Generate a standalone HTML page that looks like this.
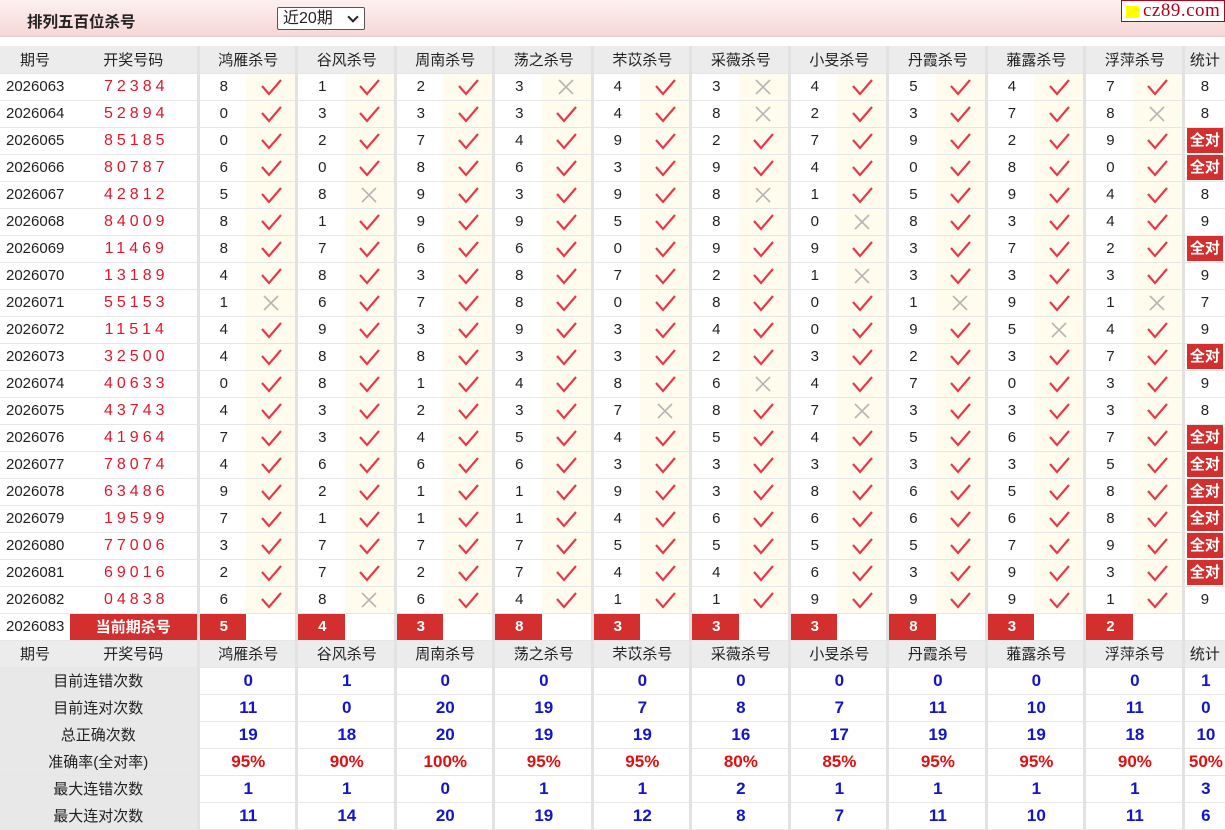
<!DOCTYPE html>
<html><head><meta charset="utf-8">
<style>
*{margin:0;padding:0;box-sizing:border-box}
body{width:1225px;height:830px;background:#fff;font-family:"Liberation Sans","Noto Sans CJK SC",sans-serif;font-size:15px;color:#222;overflow:hidden;position:relative}
.top{position:absolute;left:0;top:0;width:1225px;height:37px;background:linear-gradient(#fdf0f0,#f7d7d7);border-bottom:1px solid #e8c8c8}
.title{position:absolute;left:27px;top:10px;font-size:15.5px;font-weight:bold;color:#222}
.sel{position:absolute;left:277px;top:7px;width:88px;height:23px;border:1px solid #555;background:#fff;font-size:16px;padding-left:5px;line-height:21px;border-radius:2px}
.sel b{position:absolute;right:7px;top:5px;width:8px;height:8px;border-right:2px solid #222;border-bottom:2px solid #222;transform:rotate(45deg)}
.logo{position:absolute;left:1121px;top:0;width:104px;height:22px;border:1px solid #b00020;background:#fff;font-family:"Liberation Serif",serif;font-size:19px;color:#b00020;line-height:20px;padding-left:21px;letter-spacing:0.5px}
.logo i{position:absolute;left:4px;top:5px;width:13px;height:12px;background:#ff0}
table{position:absolute;left:0;top:46px;width:1225px;border-collapse:collapse;table-layout:fixed}
td{height:27px;border-bottom:1px solid #e6e6e6;text-align:center;white-space:nowrap;overflow:hidden;padding:0}
tr.h td{background:#ececec;color:#222}
td.q{text-align:left;padding-left:6px}
td.k{color:#e0162b;letter-spacing:4px;font-size:16px;padding-left:6px}
td.n{border-left:3px solid #e2e2e2;padding-left:2px}
td.c{background:#fffcee}
td.s{border-left:3px solid #e2e2e2}
td.r{background:#d32f2f;color:#fff;font-weight:bold}
td.a{padding:0 2px}
td.a span{display:block;background:#d32f2f;color:#fff;font-weight:bold;height:25px;line-height:25px}
tr.h td.c{background:#ececec}
tr.cur td.c{background:#fff}
td.L{background:#e8e8e8}
td.v{font-weight:bold;color:#1414c8;font-size:17px;border-left:3px solid #e2e2e2;padding-left:2px}
td.p{color:#e01010}
svg{display:block;margin:auto}
</style></head><body>
<svg width="0" height="0" style="position:absolute"><defs>
<symbol id="ok" viewBox="0 0 22 18"><path d="M2 8 L9 16 L21 2" fill="none" stroke="#e8374a" stroke-width="2.2"/></symbol>
<symbol id="no" viewBox="0 0 18 18"><path d="M2 2 L16 16 M16 2 L2 16" fill="none" stroke="#b5b5b5" stroke-width="1.6"/></symbol>
</defs></svg>
<div class="top"><div class="title">排列五百位杀号</div><div class="sel">近20期<b></b></div><div class="logo"><i></i>cz89.com</div></div>
<table>
<colgroup><col style="width:70px"><col style="width:128px"><col style="width:48px"><col style="width:50.5px"><col style="width:48px"><col style="width:50.5px"><col style="width:48px"><col style="width:50.5px"><col style="width:48px"><col style="width:50.5px"><col style="width:48px"><col style="width:50.5px"><col style="width:48px"><col style="width:50.5px"><col style="width:48px"><col style="width:50.5px"><col style="width:48px"><col style="width:50.5px"><col style="width:48px"><col style="width:50.5px"><col style="width:48px"><col style="width:50.5px"><col style="width:42px"></colgroup>
<tr class="h"><td>期号</td><td>开奖号码</td><td class="n" colspan="2">鸿雁杀号</td><td class="n" colspan="2">谷风杀号</td><td class="n" colspan="2">周南杀号</td><td class="n" colspan="2">荡之杀号</td><td class="n" colspan="2">芣苡杀号</td><td class="n" colspan="2">采薇杀号</td><td class="n" colspan="2">小旻杀号</td><td class="n" colspan="2">丹霞杀号</td><td class="n" colspan="2">蕥露杀号</td><td class="n" colspan="2">浮萍杀号</td><td class="s">统计</td></tr>
<tr><td class="q">2026063</td><td class="k">72384</td><td class="n">8</td><td class="c"><svg width="22" height="18"><use href="#ok"/></svg></td><td class="n">1</td><td class="c"><svg width="22" height="18"><use href="#ok"/></svg></td><td class="n">2</td><td class="c"><svg width="22" height="18"><use href="#ok"/></svg></td><td class="n">3</td><td class="c"><svg width="18" height="18"><use href="#no"/></svg></td><td class="n">4</td><td class="c"><svg width="22" height="18"><use href="#ok"/></svg></td><td class="n">3</td><td class="c"><svg width="18" height="18"><use href="#no"/></svg></td><td class="n">4</td><td class="c"><svg width="22" height="18"><use href="#ok"/></svg></td><td class="n">5</td><td class="c"><svg width="22" height="18"><use href="#ok"/></svg></td><td class="n">4</td><td class="c"><svg width="22" height="18"><use href="#ok"/></svg></td><td class="n">7</td><td class="c"><svg width="22" height="18"><use href="#ok"/></svg></td><td class="s">8</td></tr>
<tr><td class="q">2026064</td><td class="k">52894</td><td class="n">0</td><td class="c"><svg width="22" height="18"><use href="#ok"/></svg></td><td class="n">3</td><td class="c"><svg width="22" height="18"><use href="#ok"/></svg></td><td class="n">3</td><td class="c"><svg width="22" height="18"><use href="#ok"/></svg></td><td class="n">3</td><td class="c"><svg width="22" height="18"><use href="#ok"/></svg></td><td class="n">4</td><td class="c"><svg width="22" height="18"><use href="#ok"/></svg></td><td class="n">8</td><td class="c"><svg width="18" height="18"><use href="#no"/></svg></td><td class="n">2</td><td class="c"><svg width="22" height="18"><use href="#ok"/></svg></td><td class="n">3</td><td class="c"><svg width="22" height="18"><use href="#ok"/></svg></td><td class="n">7</td><td class="c"><svg width="22" height="18"><use href="#ok"/></svg></td><td class="n">8</td><td class="c"><svg width="18" height="18"><use href="#no"/></svg></td><td class="s">8</td></tr>
<tr><td class="q">2026065</td><td class="k">85185</td><td class="n">0</td><td class="c"><svg width="22" height="18"><use href="#ok"/></svg></td><td class="n">2</td><td class="c"><svg width="22" height="18"><use href="#ok"/></svg></td><td class="n">7</td><td class="c"><svg width="22" height="18"><use href="#ok"/></svg></td><td class="n">4</td><td class="c"><svg width="22" height="18"><use href="#ok"/></svg></td><td class="n">9</td><td class="c"><svg width="22" height="18"><use href="#ok"/></svg></td><td class="n">2</td><td class="c"><svg width="22" height="18"><use href="#ok"/></svg></td><td class="n">7</td><td class="c"><svg width="22" height="18"><use href="#ok"/></svg></td><td class="n">9</td><td class="c"><svg width="22" height="18"><use href="#ok"/></svg></td><td class="n">2</td><td class="c"><svg width="22" height="18"><use href="#ok"/></svg></td><td class="n">9</td><td class="c"><svg width="22" height="18"><use href="#ok"/></svg></td><td class="s a"><span>全对</span></td></tr>
<tr><td class="q">2026066</td><td class="k">80787</td><td class="n">6</td><td class="c"><svg width="22" height="18"><use href="#ok"/></svg></td><td class="n">0</td><td class="c"><svg width="22" height="18"><use href="#ok"/></svg></td><td class="n">8</td><td class="c"><svg width="22" height="18"><use href="#ok"/></svg></td><td class="n">6</td><td class="c"><svg width="22" height="18"><use href="#ok"/></svg></td><td class="n">3</td><td class="c"><svg width="22" height="18"><use href="#ok"/></svg></td><td class="n">9</td><td class="c"><svg width="22" height="18"><use href="#ok"/></svg></td><td class="n">4</td><td class="c"><svg width="22" height="18"><use href="#ok"/></svg></td><td class="n">0</td><td class="c"><svg width="22" height="18"><use href="#ok"/></svg></td><td class="n">8</td><td class="c"><svg width="22" height="18"><use href="#ok"/></svg></td><td class="n">0</td><td class="c"><svg width="22" height="18"><use href="#ok"/></svg></td><td class="s a"><span>全对</span></td></tr>
<tr><td class="q">2026067</td><td class="k">42812</td><td class="n">5</td><td class="c"><svg width="22" height="18"><use href="#ok"/></svg></td><td class="n">8</td><td class="c"><svg width="18" height="18"><use href="#no"/></svg></td><td class="n">9</td><td class="c"><svg width="22" height="18"><use href="#ok"/></svg></td><td class="n">3</td><td class="c"><svg width="22" height="18"><use href="#ok"/></svg></td><td class="n">9</td><td class="c"><svg width="22" height="18"><use href="#ok"/></svg></td><td class="n">8</td><td class="c"><svg width="18" height="18"><use href="#no"/></svg></td><td class="n">1</td><td class="c"><svg width="22" height="18"><use href="#ok"/></svg></td><td class="n">5</td><td class="c"><svg width="22" height="18"><use href="#ok"/></svg></td><td class="n">9</td><td class="c"><svg width="22" height="18"><use href="#ok"/></svg></td><td class="n">4</td><td class="c"><svg width="22" height="18"><use href="#ok"/></svg></td><td class="s">8</td></tr>
<tr><td class="q">2026068</td><td class="k">84009</td><td class="n">8</td><td class="c"><svg width="22" height="18"><use href="#ok"/></svg></td><td class="n">1</td><td class="c"><svg width="22" height="18"><use href="#ok"/></svg></td><td class="n">9</td><td class="c"><svg width="22" height="18"><use href="#ok"/></svg></td><td class="n">9</td><td class="c"><svg width="22" height="18"><use href="#ok"/></svg></td><td class="n">5</td><td class="c"><svg width="22" height="18"><use href="#ok"/></svg></td><td class="n">8</td><td class="c"><svg width="22" height="18"><use href="#ok"/></svg></td><td class="n">0</td><td class="c"><svg width="18" height="18"><use href="#no"/></svg></td><td class="n">8</td><td class="c"><svg width="22" height="18"><use href="#ok"/></svg></td><td class="n">3</td><td class="c"><svg width="22" height="18"><use href="#ok"/></svg></td><td class="n">4</td><td class="c"><svg width="22" height="18"><use href="#ok"/></svg></td><td class="s">9</td></tr>
<tr><td class="q">2026069</td><td class="k">11469</td><td class="n">8</td><td class="c"><svg width="22" height="18"><use href="#ok"/></svg></td><td class="n">7</td><td class="c"><svg width="22" height="18"><use href="#ok"/></svg></td><td class="n">6</td><td class="c"><svg width="22" height="18"><use href="#ok"/></svg></td><td class="n">6</td><td class="c"><svg width="22" height="18"><use href="#ok"/></svg></td><td class="n">0</td><td class="c"><svg width="22" height="18"><use href="#ok"/></svg></td><td class="n">9</td><td class="c"><svg width="22" height="18"><use href="#ok"/></svg></td><td class="n">9</td><td class="c"><svg width="22" height="18"><use href="#ok"/></svg></td><td class="n">3</td><td class="c"><svg width="22" height="18"><use href="#ok"/></svg></td><td class="n">7</td><td class="c"><svg width="22" height="18"><use href="#ok"/></svg></td><td class="n">2</td><td class="c"><svg width="22" height="18"><use href="#ok"/></svg></td><td class="s a"><span>全对</span></td></tr>
<tr><td class="q">2026070</td><td class="k">13189</td><td class="n">4</td><td class="c"><svg width="22" height="18"><use href="#ok"/></svg></td><td class="n">8</td><td class="c"><svg width="22" height="18"><use href="#ok"/></svg></td><td class="n">3</td><td class="c"><svg width="22" height="18"><use href="#ok"/></svg></td><td class="n">8</td><td class="c"><svg width="22" height="18"><use href="#ok"/></svg></td><td class="n">7</td><td class="c"><svg width="22" height="18"><use href="#ok"/></svg></td><td class="n">2</td><td class="c"><svg width="22" height="18"><use href="#ok"/></svg></td><td class="n">1</td><td class="c"><svg width="18" height="18"><use href="#no"/></svg></td><td class="n">3</td><td class="c"><svg width="22" height="18"><use href="#ok"/></svg></td><td class="n">3</td><td class="c"><svg width="22" height="18"><use href="#ok"/></svg></td><td class="n">3</td><td class="c"><svg width="22" height="18"><use href="#ok"/></svg></td><td class="s">9</td></tr>
<tr><td class="q">2026071</td><td class="k">55153</td><td class="n">1</td><td class="c"><svg width="18" height="18"><use href="#no"/></svg></td><td class="n">6</td><td class="c"><svg width="22" height="18"><use href="#ok"/></svg></td><td class="n">7</td><td class="c"><svg width="22" height="18"><use href="#ok"/></svg></td><td class="n">8</td><td class="c"><svg width="22" height="18"><use href="#ok"/></svg></td><td class="n">0</td><td class="c"><svg width="22" height="18"><use href="#ok"/></svg></td><td class="n">8</td><td class="c"><svg width="22" height="18"><use href="#ok"/></svg></td><td class="n">0</td><td class="c"><svg width="22" height="18"><use href="#ok"/></svg></td><td class="n">1</td><td class="c"><svg width="18" height="18"><use href="#no"/></svg></td><td class="n">9</td><td class="c"><svg width="22" height="18"><use href="#ok"/></svg></td><td class="n">1</td><td class="c"><svg width="18" height="18"><use href="#no"/></svg></td><td class="s">7</td></tr>
<tr><td class="q">2026072</td><td class="k">11514</td><td class="n">4</td><td class="c"><svg width="22" height="18"><use href="#ok"/></svg></td><td class="n">9</td><td class="c"><svg width="22" height="18"><use href="#ok"/></svg></td><td class="n">3</td><td class="c"><svg width="22" height="18"><use href="#ok"/></svg></td><td class="n">9</td><td class="c"><svg width="22" height="18"><use href="#ok"/></svg></td><td class="n">3</td><td class="c"><svg width="22" height="18"><use href="#ok"/></svg></td><td class="n">4</td><td class="c"><svg width="22" height="18"><use href="#ok"/></svg></td><td class="n">0</td><td class="c"><svg width="22" height="18"><use href="#ok"/></svg></td><td class="n">9</td><td class="c"><svg width="22" height="18"><use href="#ok"/></svg></td><td class="n">5</td><td class="c"><svg width="18" height="18"><use href="#no"/></svg></td><td class="n">4</td><td class="c"><svg width="22" height="18"><use href="#ok"/></svg></td><td class="s">9</td></tr>
<tr><td class="q">2026073</td><td class="k">32500</td><td class="n">4</td><td class="c"><svg width="22" height="18"><use href="#ok"/></svg></td><td class="n">8</td><td class="c"><svg width="22" height="18"><use href="#ok"/></svg></td><td class="n">8</td><td class="c"><svg width="22" height="18"><use href="#ok"/></svg></td><td class="n">3</td><td class="c"><svg width="22" height="18"><use href="#ok"/></svg></td><td class="n">3</td><td class="c"><svg width="22" height="18"><use href="#ok"/></svg></td><td class="n">2</td><td class="c"><svg width="22" height="18"><use href="#ok"/></svg></td><td class="n">3</td><td class="c"><svg width="22" height="18"><use href="#ok"/></svg></td><td class="n">2</td><td class="c"><svg width="22" height="18"><use href="#ok"/></svg></td><td class="n">3</td><td class="c"><svg width="22" height="18"><use href="#ok"/></svg></td><td class="n">7</td><td class="c"><svg width="22" height="18"><use href="#ok"/></svg></td><td class="s a"><span>全对</span></td></tr>
<tr><td class="q">2026074</td><td class="k">40633</td><td class="n">0</td><td class="c"><svg width="22" height="18"><use href="#ok"/></svg></td><td class="n">8</td><td class="c"><svg width="22" height="18"><use href="#ok"/></svg></td><td class="n">1</td><td class="c"><svg width="22" height="18"><use href="#ok"/></svg></td><td class="n">4</td><td class="c"><svg width="22" height="18"><use href="#ok"/></svg></td><td class="n">8</td><td class="c"><svg width="22" height="18"><use href="#ok"/></svg></td><td class="n">6</td><td class="c"><svg width="18" height="18"><use href="#no"/></svg></td><td class="n">4</td><td class="c"><svg width="22" height="18"><use href="#ok"/></svg></td><td class="n">7</td><td class="c"><svg width="22" height="18"><use href="#ok"/></svg></td><td class="n">0</td><td class="c"><svg width="22" height="18"><use href="#ok"/></svg></td><td class="n">3</td><td class="c"><svg width="22" height="18"><use href="#ok"/></svg></td><td class="s">9</td></tr>
<tr><td class="q">2026075</td><td class="k">43743</td><td class="n">4</td><td class="c"><svg width="22" height="18"><use href="#ok"/></svg></td><td class="n">3</td><td class="c"><svg width="22" height="18"><use href="#ok"/></svg></td><td class="n">2</td><td class="c"><svg width="22" height="18"><use href="#ok"/></svg></td><td class="n">3</td><td class="c"><svg width="22" height="18"><use href="#ok"/></svg></td><td class="n">7</td><td class="c"><svg width="18" height="18"><use href="#no"/></svg></td><td class="n">8</td><td class="c"><svg width="22" height="18"><use href="#ok"/></svg></td><td class="n">7</td><td class="c"><svg width="18" height="18"><use href="#no"/></svg></td><td class="n">3</td><td class="c"><svg width="22" height="18"><use href="#ok"/></svg></td><td class="n">3</td><td class="c"><svg width="22" height="18"><use href="#ok"/></svg></td><td class="n">3</td><td class="c"><svg width="22" height="18"><use href="#ok"/></svg></td><td class="s">8</td></tr>
<tr><td class="q">2026076</td><td class="k">41964</td><td class="n">7</td><td class="c"><svg width="22" height="18"><use href="#ok"/></svg></td><td class="n">3</td><td class="c"><svg width="22" height="18"><use href="#ok"/></svg></td><td class="n">4</td><td class="c"><svg width="22" height="18"><use href="#ok"/></svg></td><td class="n">5</td><td class="c"><svg width="22" height="18"><use href="#ok"/></svg></td><td class="n">4</td><td class="c"><svg width="22" height="18"><use href="#ok"/></svg></td><td class="n">5</td><td class="c"><svg width="22" height="18"><use href="#ok"/></svg></td><td class="n">4</td><td class="c"><svg width="22" height="18"><use href="#ok"/></svg></td><td class="n">5</td><td class="c"><svg width="22" height="18"><use href="#ok"/></svg></td><td class="n">6</td><td class="c"><svg width="22" height="18"><use href="#ok"/></svg></td><td class="n">7</td><td class="c"><svg width="22" height="18"><use href="#ok"/></svg></td><td class="s a"><span>全对</span></td></tr>
<tr><td class="q">2026077</td><td class="k">78074</td><td class="n">4</td><td class="c"><svg width="22" height="18"><use href="#ok"/></svg></td><td class="n">6</td><td class="c"><svg width="22" height="18"><use href="#ok"/></svg></td><td class="n">6</td><td class="c"><svg width="22" height="18"><use href="#ok"/></svg></td><td class="n">6</td><td class="c"><svg width="22" height="18"><use href="#ok"/></svg></td><td class="n">3</td><td class="c"><svg width="22" height="18"><use href="#ok"/></svg></td><td class="n">3</td><td class="c"><svg width="22" height="18"><use href="#ok"/></svg></td><td class="n">3</td><td class="c"><svg width="22" height="18"><use href="#ok"/></svg></td><td class="n">3</td><td class="c"><svg width="22" height="18"><use href="#ok"/></svg></td><td class="n">3</td><td class="c"><svg width="22" height="18"><use href="#ok"/></svg></td><td class="n">5</td><td class="c"><svg width="22" height="18"><use href="#ok"/></svg></td><td class="s a"><span>全对</span></td></tr>
<tr><td class="q">2026078</td><td class="k">63486</td><td class="n">9</td><td class="c"><svg width="22" height="18"><use href="#ok"/></svg></td><td class="n">2</td><td class="c"><svg width="22" height="18"><use href="#ok"/></svg></td><td class="n">1</td><td class="c"><svg width="22" height="18"><use href="#ok"/></svg></td><td class="n">1</td><td class="c"><svg width="22" height="18"><use href="#ok"/></svg></td><td class="n">9</td><td class="c"><svg width="22" height="18"><use href="#ok"/></svg></td><td class="n">3</td><td class="c"><svg width="22" height="18"><use href="#ok"/></svg></td><td class="n">8</td><td class="c"><svg width="22" height="18"><use href="#ok"/></svg></td><td class="n">6</td><td class="c"><svg width="22" height="18"><use href="#ok"/></svg></td><td class="n">5</td><td class="c"><svg width="22" height="18"><use href="#ok"/></svg></td><td class="n">8</td><td class="c"><svg width="22" height="18"><use href="#ok"/></svg></td><td class="s a"><span>全对</span></td></tr>
<tr><td class="q">2026079</td><td class="k">19599</td><td class="n">7</td><td class="c"><svg width="22" height="18"><use href="#ok"/></svg></td><td class="n">1</td><td class="c"><svg width="22" height="18"><use href="#ok"/></svg></td><td class="n">1</td><td class="c"><svg width="22" height="18"><use href="#ok"/></svg></td><td class="n">1</td><td class="c"><svg width="22" height="18"><use href="#ok"/></svg></td><td class="n">4</td><td class="c"><svg width="22" height="18"><use href="#ok"/></svg></td><td class="n">6</td><td class="c"><svg width="22" height="18"><use href="#ok"/></svg></td><td class="n">6</td><td class="c"><svg width="22" height="18"><use href="#ok"/></svg></td><td class="n">6</td><td class="c"><svg width="22" height="18"><use href="#ok"/></svg></td><td class="n">6</td><td class="c"><svg width="22" height="18"><use href="#ok"/></svg></td><td class="n">8</td><td class="c"><svg width="22" height="18"><use href="#ok"/></svg></td><td class="s a"><span>全对</span></td></tr>
<tr><td class="q">2026080</td><td class="k">77006</td><td class="n">3</td><td class="c"><svg width="22" height="18"><use href="#ok"/></svg></td><td class="n">7</td><td class="c"><svg width="22" height="18"><use href="#ok"/></svg></td><td class="n">7</td><td class="c"><svg width="22" height="18"><use href="#ok"/></svg></td><td class="n">7</td><td class="c"><svg width="22" height="18"><use href="#ok"/></svg></td><td class="n">5</td><td class="c"><svg width="22" height="18"><use href="#ok"/></svg></td><td class="n">5</td><td class="c"><svg width="22" height="18"><use href="#ok"/></svg></td><td class="n">5</td><td class="c"><svg width="22" height="18"><use href="#ok"/></svg></td><td class="n">5</td><td class="c"><svg width="22" height="18"><use href="#ok"/></svg></td><td class="n">7</td><td class="c"><svg width="22" height="18"><use href="#ok"/></svg></td><td class="n">9</td><td class="c"><svg width="22" height="18"><use href="#ok"/></svg></td><td class="s a"><span>全对</span></td></tr>
<tr><td class="q">2026081</td><td class="k">69016</td><td class="n">2</td><td class="c"><svg width="22" height="18"><use href="#ok"/></svg></td><td class="n">7</td><td class="c"><svg width="22" height="18"><use href="#ok"/></svg></td><td class="n">2</td><td class="c"><svg width="22" height="18"><use href="#ok"/></svg></td><td class="n">7</td><td class="c"><svg width="22" height="18"><use href="#ok"/></svg></td><td class="n">4</td><td class="c"><svg width="22" height="18"><use href="#ok"/></svg></td><td class="n">4</td><td class="c"><svg width="22" height="18"><use href="#ok"/></svg></td><td class="n">6</td><td class="c"><svg width="22" height="18"><use href="#ok"/></svg></td><td class="n">3</td><td class="c"><svg width="22" height="18"><use href="#ok"/></svg></td><td class="n">9</td><td class="c"><svg width="22" height="18"><use href="#ok"/></svg></td><td class="n">3</td><td class="c"><svg width="22" height="18"><use href="#ok"/></svg></td><td class="s a"><span>全对</span></td></tr>
<tr><td class="q">2026082</td><td class="k">04838</td><td class="n">6</td><td class="c"><svg width="22" height="18"><use href="#ok"/></svg></td><td class="n">8</td><td class="c"><svg width="18" height="18"><use href="#no"/></svg></td><td class="n">6</td><td class="c"><svg width="22" height="18"><use href="#ok"/></svg></td><td class="n">4</td><td class="c"><svg width="22" height="18"><use href="#ok"/></svg></td><td class="n">1</td><td class="c"><svg width="22" height="18"><use href="#ok"/></svg></td><td class="n">1</td><td class="c"><svg width="22" height="18"><use href="#ok"/></svg></td><td class="n">9</td><td class="c"><svg width="22" height="18"><use href="#ok"/></svg></td><td class="n">9</td><td class="c"><svg width="22" height="18"><use href="#ok"/></svg></td><td class="n">9</td><td class="c"><svg width="22" height="18"><use href="#ok"/></svg></td><td class="n">1</td><td class="c"><svg width="22" height="18"><use href="#ok"/></svg></td><td class="s">9</td></tr>
<tr class="cur"><td class="q">2026083</td><td class="r">当前期杀号</td><td class="n r">5</td><td class="c"></td><td class="n r">4</td><td class="c"></td><td class="n r">3</td><td class="c"></td><td class="n r">8</td><td class="c"></td><td class="n r">3</td><td class="c"></td><td class="n r">3</td><td class="c"></td><td class="n r">3</td><td class="c"></td><td class="n r">8</td><td class="c"></td><td class="n r">3</td><td class="c"></td><td class="n r">2</td><td class="c"></td><td class="s"></td></tr>
<tr class="h"><td>期号</td><td>开奖号码</td><td class="n" colspan="2">鸿雁杀号</td><td class="n" colspan="2">谷风杀号</td><td class="n" colspan="2">周南杀号</td><td class="n" colspan="2">荡之杀号</td><td class="n" colspan="2">芣苡杀号</td><td class="n" colspan="2">采薇杀号</td><td class="n" colspan="2">小旻杀号</td><td class="n" colspan="2">丹霞杀号</td><td class="n" colspan="2">蕥露杀号</td><td class="n" colspan="2">浮萍杀号</td><td class="s">统计</td></tr>
<tr><td class="L" colspan="2">目前连错次数</td><td class="v" colspan="2">0</td><td class="v" colspan="2">1</td><td class="v" colspan="2">0</td><td class="v" colspan="2">0</td><td class="v" colspan="2">0</td><td class="v" colspan="2">0</td><td class="v" colspan="2">0</td><td class="v" colspan="2">0</td><td class="v" colspan="2">0</td><td class="v" colspan="2">0</td><td class="v">1</td></tr>
<tr><td class="L" colspan="2">目前连对次数</td><td class="v" colspan="2">11</td><td class="v" colspan="2">0</td><td class="v" colspan="2">20</td><td class="v" colspan="2">19</td><td class="v" colspan="2">7</td><td class="v" colspan="2">8</td><td class="v" colspan="2">7</td><td class="v" colspan="2">11</td><td class="v" colspan="2">10</td><td class="v" colspan="2">11</td><td class="v">0</td></tr>
<tr><td class="L" colspan="2">总正确次数</td><td class="v" colspan="2">19</td><td class="v" colspan="2">18</td><td class="v" colspan="2">20</td><td class="v" colspan="2">19</td><td class="v" colspan="2">19</td><td class="v" colspan="2">16</td><td class="v" colspan="2">17</td><td class="v" colspan="2">19</td><td class="v" colspan="2">19</td><td class="v" colspan="2">18</td><td class="v">10</td></tr>
<tr><td class="L" colspan="2">准确率(全对率)</td><td class="v p" colspan="2">95%</td><td class="v p" colspan="2">90%</td><td class="v p" colspan="2">100%</td><td class="v p" colspan="2">95%</td><td class="v p" colspan="2">95%</td><td class="v p" colspan="2">80%</td><td class="v p" colspan="2">85%</td><td class="v p" colspan="2">95%</td><td class="v p" colspan="2">95%</td><td class="v p" colspan="2">90%</td><td class="v p">50%</td></tr>
<tr><td class="L" colspan="2">最大连错次数</td><td class="v" colspan="2">1</td><td class="v" colspan="2">1</td><td class="v" colspan="2">0</td><td class="v" colspan="2">1</td><td class="v" colspan="2">1</td><td class="v" colspan="2">2</td><td class="v" colspan="2">1</td><td class="v" colspan="2">1</td><td class="v" colspan="2">1</td><td class="v" colspan="2">1</td><td class="v">3</td></tr>
<tr><td class="L" colspan="2">最大连对次数</td><td class="v" colspan="2">11</td><td class="v" colspan="2">14</td><td class="v" colspan="2">20</td><td class="v" colspan="2">19</td><td class="v" colspan="2">12</td><td class="v" colspan="2">8</td><td class="v" colspan="2">7</td><td class="v" colspan="2">11</td><td class="v" colspan="2">10</td><td class="v" colspan="2">11</td><td class="v">6</td></tr>
</table>
</body></html>
